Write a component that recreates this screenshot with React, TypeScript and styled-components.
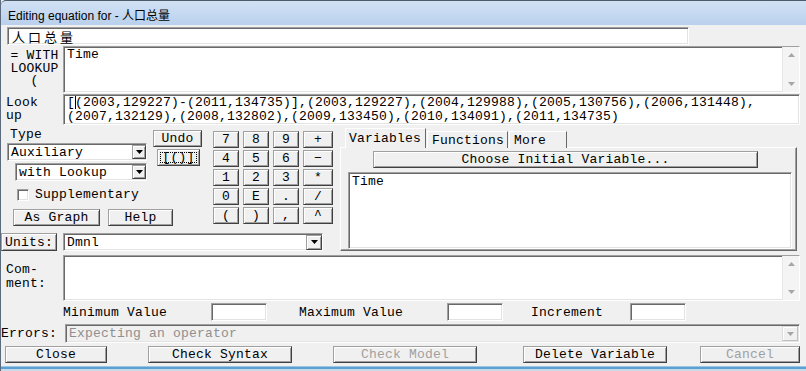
import styled, { createGlobalStyle } from "styled-components";

const GlobalStyle = createGlobalStyle`
  html, body {
    margin: 0;
    padding: 0;
    background: #f0f0f0;
  }
  body {
    width: 806px;
    height: 371px;
    overflow: hidden;
  }
`;

const mono = `"Liberation Mono", "Noto Sans CJK SC", monospace`;

const raised = `
  border: 1px solid;
  border-color: #a0a0a0 #404040 #404040 #a0a0a0;
  box-shadow: inset 1px 1px 0 #ffffff, inset -1px -1px 0 #a0a0a0;
  background: #f0f0f0;
`;

const sunken = `
  border: 1px solid;
  border-color: #a0a0a0 #ffffff #ffffff #a0a0a0;
  box-shadow: inset 1px 1px 0 #696969, inset -1px -1px 0 #e3e3e3;
`;

const Window = styled.div`
  width: 806px;
  height: 371px;
  box-sizing: border-box;
  border-left: 1px solid #5b6b7d;
  display: flex;
  flex-direction: column;
  background: #f0f0f0;
  font-family: ${mono};
  font-size: 13px;
  letter-spacing: 0.2px;
  line-height: 13px;
  color: #000;
`;

const TitleBar = styled.div`
  height: 25px;
  flex: none;
  box-sizing: border-box;
  border-top: 1px solid #4d5a69;
  border-top-left-radius: 5px;
  background: linear-gradient(#d2e2f5, #b9d0ec);
  padding: 3px 0 0 7px;
  display: flex;
  align-items: center;
  letter-spacing: 0;
  font: 12px "Liberation Sans", "Noto Sans CJK SC", sans-serif;
`;

const Body = styled.div`
  flex: 1;
  display: flex;
  flex-direction: column;
  padding-right: 6px;
`;

const Row = styled.div<{ $mt: number; $h: number }>`
  display: flex;
  flex: none;
  margin-top: ${(p) => p.$mt}px;
  height: ${(p) => p.$h}px;
`;

const SideLabel = styled.div<{ $pt: number; $center?: boolean }>`
  width: 62px;
  flex: none;
  box-sizing: border-box;
  padding: ${(p) => p.$pt}px 0 0 5px;
  text-align: ${(p) => (p.$center ? "center" : "left")};
  line-height: ${(p) => (p.$center ? 12.5 : 12.5)}px;
  white-space: pre;
`;

const TextBox = styled.div<{ $w?: number; $ml?: number; $disabled?: boolean }>`
  ${sunken}
  box-sizing: border-box;
  height: 100%;
  display: flex;
  margin-left: ${(p) => p.$ml ?? 0}px;
  background: ${(p) => (p.$disabled ? "#f0f0f0" : "#ffffff")};
  color: ${(p) => (p.$disabled ? "#8f8f8f" : "#000")};
  ${(p) => (p.$w ? `width: ${p.$w}px; flex: none;` : "flex: 1;")}
`;

const BoxText = styled.div<{ $pt?: number; $lh?: number }>`
  flex: 1;
  padding: ${(p) => p.$pt ?? 1}px 3px 0;
  line-height: ${(p) => p.$lh ?? 13}px;
  white-space: pre;
  overflow: hidden;
`;

const NameText = styled.div`
  padding: 0 4px;
  display: flex;
  align-items: center;
  font: 13px "Noto Sans CJK SC", sans-serif;
  letter-spacing: 3px;
`;

const Caret = styled.span`
  display: inline-block;
  width: 0;
  height: 13px;
  border-left: 1px solid #000;
  margin-right: -1px;
  vertical-align: top;
`;

const ScrollBar = styled.div`
  width: 16px;
  flex: none;
  background: #f4f4f4;
  border-left: 1px solid #e8e8e8;
  display: flex;
  flex-direction: column;
  justify-content: space-between;
`;

const ScrollArrow = styled.div`
  height: 16px;
  display: flex;
  align-items: center;
  justify-content: center;
`;

const Arrow = ({ up, color }: { up?: boolean; color: string }) => (
  <svg width="7" height="4" viewBox="0 0 7 4">
    <path d={up ? "M0 4 L3.5 0 L7 4 Z" : "M0 0 L7 0 L3.5 4 Z"} fill={color} />
  </svg>
);

const VScroll = () => (
  <ScrollBar>
    <ScrollArrow>
      <Arrow up color="#a6a6a6" />
    </ScrollArrow>
    <ScrollArrow>
      <Arrow color="#a6a6a6" />
    </ScrollArrow>
  </ScrollBar>
);

const Combo = styled.div<{ $w: number; $ml: number; $mt?: number; $h?: number }>`
  ${sunken}
  box-sizing: border-box;
  flex: none;
  width: ${(p) => p.$w}px;
  height: ${(p) => p.$h ?? 18}px;
  margin-left: ${(p) => p.$ml}px;
  margin-top: ${(p) => p.$mt ?? 0}px;
  background: #fff;
  display: flex;
  align-items: center;
  padding-left: 3px;
`;

const ComboText = styled.span`
  flex: 1;
  white-space: pre;
`;

const DropBtn = styled.div<{ $w: number; $h: number; $disabled?: boolean }>`
  ${raised}
  box-sizing: border-box;
  flex: none;
  width: ${(p) => p.$w}px;
  height: ${(p) => p.$h}px;
  display: flex;
  align-items: center;
  justify-content: center;
  ${(p) =>
    p.$disabled &&
    "border-color: #dcdcdc #c0c0c0 #c0c0c0 #dcdcdc; box-shadow: inset 1px 1px 0 #fff;"}
`;

const Btn = styled.button<{ $w: number; $ml?: number; $mt?: number; $h?: number; $focus?: boolean }>`
  ${raised}
  box-sizing: border-box;
  flex: none;
  width: ${(p) => p.$w}px;
  height: ${(p) => p.$h ?? 17}px;
  margin: ${(p) => p.$mt ?? 0}px 0 0 ${(p) => p.$ml ?? 0}px;
  padding: 0;
  font: inherit;
  font-weight: normal;
  letter-spacing: inherit;
  line-height: 13px;
  color: #000;
  display: flex;
  align-items: center;
  justify-content: center;
  white-space: pre;
  &:disabled {
    color: #a0a0a0;
  }
  ${(p) => p.$focus && "outline: 1px dotted #000; outline-offset: -4px;"}
`;

const MidLeft = styled.div`
  width: 339px;
  flex: none;
  display: flex;
  flex-direction: column;
`;

const ControlArea = styled.div`
  display: flex;
  height: 99px;
`;

const TypeCol = styled.div`
  width: 152px;
  flex: none;
  display: flex;
  flex-direction: column;
`;

const TypeLabel = styled.div`
  height: 13px;
  padding-left: 9px;
  margin-top: 1px;
`;

const CheckRow = styled.label`
  display: flex;
  align-items: center;
  height: 13px;
  margin: 7px 0 0 16px;
`;

const CheckBox = styled.span`
  ${sunken}
  width: 12px;
  height: 12px;
  box-sizing: border-box;
  background: #fff;
  margin-right: 6px;
`;

const ButtonPair = styled.div`
  display: flex;
  margin: 8px 0 0 12px;
`;

const UndoCol = styled.div`
  width: 52px;
  flex: none;
  display: flex;
  flex-direction: column;
  padding-top: 3px;
`;

const Keypad = styled.div`
  display: grid;
  grid-template-columns: 26px 26px 26px 30px;
  grid-auto-rows: 17px;
  column-gap: 4px;
  row-gap: 2px;
  margin: 4px 0 0 8px;
  align-self: flex-start;
`;

const UnitsRow = styled.div`
  display: flex;
  height: 18px;
  margin-top: 7px;
`;

const RightPanel = styled.div`
  width: 457px;
  flex: none;
  margin-top: 1px;
  display: flex;
  flex-direction: column;
`;

const TabStrip = styled.div`
  display: flex;
  align-items: flex-end;
  height: 20px;
  padding-left: 5px;
  position: relative;
  z-index: 1;
`;

const Tab = styled.div<{ $w: number; $active?: boolean }>`
  width: ${(p) => p.$w}px;
  height: ${(p) => (p.$active ? 20 : 17)}px;
  box-sizing: border-box;
  border: 1px solid;
  border-bottom: none;
  border-color: #fff #696969 transparent #fff;
  padding: ${(p) => (p.$active ? 3 : 2)}px 0 0 ${(p) => (p.$active ? 3 : 4)}px;
  margin-left: ${(p) => (p.$active ? 0 : 1)}px;
  background: #f0f0f0;
`;

const PanelBody = styled.div`
  flex: 1;
  margin-top: -1px;
  box-sizing: border-box;
  border: 1px solid;
  border-color: #fff #696969 #696969 #fff;
  box-shadow: inset -1px -1px 0 #a0a0a0;
  display: flex;
  flex-direction: column;
`;

const ListBox = styled.div`
  ${sunken}
  box-sizing: border-box;
  width: 444px;
  height: 77px;
  margin: 4px 0 0 7px;
  background: #fff;
  padding: 2px 3px;
`;

const CommentLabel = styled.div`
  width: 62px;
  flex: none;
  box-sizing: border-box;
  padding: 8px 0 0 5px;
  line-height: 14px;
  white-space: pre;
`;

const RangeLabel = styled.div<{ $ml: number }>`
  margin-left: ${(p) => p.$ml}px;
  display: flex;
  align-items: center;
  white-space: pre;
`;

const RangeInput = styled.div<{ $ml: number }>`
  ${sunken}
  box-sizing: border-box;
  width: 56px;
  height: 18px;
  margin-left: ${(p) => p.$ml}px;
  background: #fff;
`;

const ErrLabel = styled.div`
  width: 56px;
  flex: none;
  display: flex;
  align-items: center;
`;

const ErrBox = styled.div`
  ${sunken}
  box-sizing: border-box;
  flex: 1;
  margin-left: 8px;
  background: #f0f0f0;
  color: #8f8f8f;
  display: flex;
  align-items: center;
  padding: 0 1px 0 3px;
`;

const BottomEdge = styled.div`
  flex: 1;
  background: linear-gradient(
    #f0f0f0 0 3px,
    #9cc4e4 3px 4px,
    #5e9fd2 4px 6px,
    #c6daee 6px
  );
`;

const keys = ["7", "8", "9", "+", "4", "5", "6", "−", "1", "2", "3", "*", "0", "E", ".", "/", "(", ")", ",", "^"];
const wideKeys = ["+", "−", "*", "/", "^"];

export default function App() {
  return (
    <>
      <GlobalStyle />
      <Window>
        <TitleBar>Editing equation for - 人口总量</TitleBar>
        <Body>
          <Row $mt={2} $h={18}>
            <TextBox $w={682} $ml={6}>
              <NameText>人口总量</NameText>
            </TextBox>
          </Row>

          <Row $mt={1} $h={47}>
            <SideLabel $pt={4} $center>
              {"= WITH\nLOOKUP\n("}
            </SideLabel>
            <TextBox>
              <BoxText>Time</BoxText>
              <VScroll />
            </TextBox>
          </Row>

          <Row $mt={1} $h={31}>
            <SideLabel $pt={3}>{"Look\nup"}</SideLabel>
            <TextBox>
              <BoxText $pt={1} $lh={14}>
                [<Caret />(2003,129227)-(2011,134735)],(2003,129227),(2004,129988),(2005,130756),(2006,131448),
                {"\n"}(2007,132129),(2008,132802),(2009,133450),(2010,134091),(2011,134735)
              </BoxText>
            </TextBox>
          </Row>

          <Row $mt={2} $h={124}>
            <MidLeft>
              <ControlArea>
                <TypeCol>
                  <TypeLabel>Type</TypeLabel>
                  <Combo $w={140} $ml={6} $mt={2}>
                    <ComboText>Auxiliary</ComboText>
                    <DropBtn $w={14} $h={14}>
                      <Arrow color="#000" />
                    </DropBtn>
                  </Combo>
                  <Combo $w={132} $ml={14} $mt={2}>
                    <ComboText>with Lookup</ComboText>
                    <DropBtn $w={14} $h={14}>
                      <Arrow color="#000" />
                    </DropBtn>
                  </Combo>
                  <CheckRow>
                    <CheckBox />
                    Supplementary
                  </CheckRow>
                  <ButtonPair>
                    <Btn $w={87}>As Graph</Btn>
                    <Btn $w={65} $ml={8}>
                      Help
                    </Btn>
                  </ButtonPair>
                </TypeCol>
                <UndoCol>
                  <Btn $w={49}>Undo</Btn>
                  <Btn $w={43} $ml={4} $mt={2} $focus>
                    [()]
                  </Btn>
                </UndoCol>
                <Keypad>
                  {keys.map((k) => (
                    <Btn key={k} $w={wideKeys.includes(k) ? 30 : 26}>
                      {k}
                    </Btn>
                  ))}
                </Keypad>
              </ControlArea>
              <UnitsRow>
                <Btn $w={56} $h={18}>
                  Units:
                </Btn>
                <Combo $w={260} $ml={6}>
                  <ComboText>Dmnl</ComboText>
                  <DropBtn $w={16} $h={15}>
                    <Arrow color="#000" />
                  </DropBtn>
                </Combo>
              </UnitsRow>
            </MidLeft>

            <RightPanel>
              <TabStrip>
                <Tab $w={81} $active>
                  Variables
                </Tab>
                <Tab $w={81}>Functions</Tab>
                <Tab $w={58}>More</Tab>
              </TabStrip>
              <PanelBody>
                <Btn $w={385} $ml={32} $mt={3}>
                  Choose Initial Variable...
                </Btn>
                <ListBox>Time</ListBox>
              </PanelBody>
            </RightPanel>
          </Row>

          <Row $mt={4} $h={46}>
            <CommentLabel>{"Com-\nment:"}</CommentLabel>
            <TextBox>
              <BoxText />
              <VScroll />
            </TextBox>
          </Row>

          <Row $mt={2} $h={18}>
            <RangeLabel $ml={62}>Minimum Value</RangeLabel>
            <RangeInput $ml={44} />
            <RangeLabel $ml={32}>Maximum Value</RangeLabel>
            <RangeInput $ml={44} />
            <RangeLabel $ml={28}>Increment</RangeLabel>
            <RangeInput $ml={27} />
          </Row>

          <Row $mt={3} $h={19}>
            <ErrLabel>Errors:</ErrLabel>
            <ErrBox>
              <ComboText>Expecting an operator</ComboText>
              <DropBtn $w={16} $h={15} $disabled>
                <Arrow color="#a6a6a6" />
              </DropBtn>
            </ErrBox>
          </Row>

          <Row $mt={3} $h={17}>
            <Btn $w={102} $ml={4}>
              Close
            </Btn>
            <Btn $w={144} $ml={41}>
              Check Syntax
            </Btn>
            <Btn $w={144} $ml={41} disabled>
              Check Model
            </Btn>
            <Btn $w={144} $ml={46}>
              Delete Variable
            </Btn>
            <Btn $w={100} $ml={33} disabled>
              Cancel
            </Btn>
          </Row>
        </Body>
        <BottomEdge />
      </Window>
    </>
  );
}
